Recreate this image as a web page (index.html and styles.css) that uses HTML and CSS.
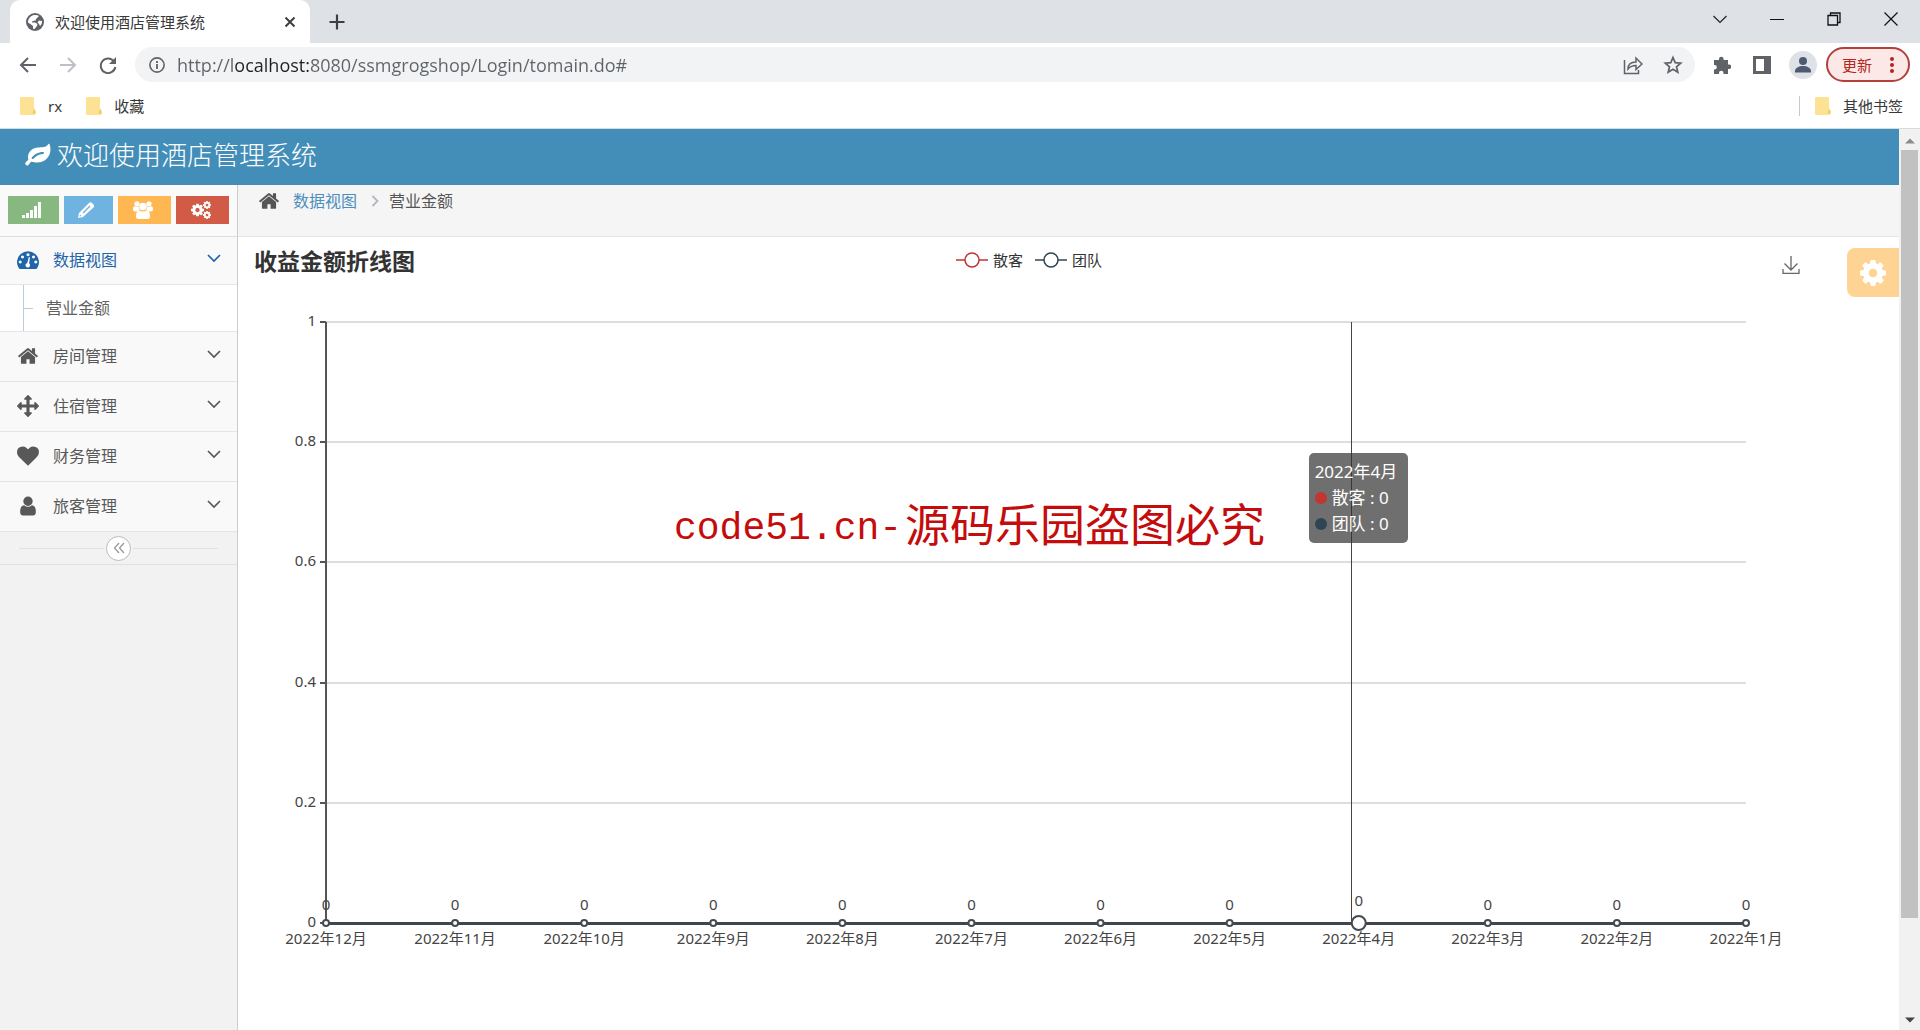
FILE: index.html
```html
<!DOCTYPE html>
<html lang="zh-CN">
<head>
<meta charset="utf-8">
<meta name="viewport" content="width=device-width, initial-scale=1">
<title>欢迎使用酒店管理系统</title>
<link rel="stylesheet" href="styles.css">
</head>
<body>
<svg class="sprite" aria-hidden="true">
  <symbol id="home" viewBox="0 0 1792 1792"><path d="M1472 992v480q0 26-19 45t-45 19h-384v-384h-256v384h-384q-26 0-45-19t-19-45v-480q0-1 .5-3t.5-3l575-474 575 474q1 2 1 6zm223-69l-62 74q-8 9-21 11h-3q-13 0-21-7l-692-577-692 577q-12 8-24 7-13-2-21-11l-62-74q-8-10-7-23.500t11-21.500l719-599q32-26 76-26t76 26l244 204v-195q0-14 9-23t23-9h192q14 0 23 9t9 23v408l219 182q10 8 11 21.500t-7 23.500z"/></symbol>
  <symbol id="user" viewBox="0 0 1792 1792"><path d="M1536 1399q0 109-62.500 187t-150.500 78h-854q-88 0-150.500-78t-62.500-187q0-85 8.500-160.500t31.500-152 58.500-131 94-89 134.500-34.500q131 128 313 128t313-128q76 0 134.500 34.500t94 89 58.500 131 31.500 152 8.500 160.500zm-256-887q0 159-112.500 271.500t-271.500 112.500-271.500-112.500-112.500-271.500 112.500-271.500 271.500-112.500 271.500 112.500 112.500 271.500z"/></symbol>
  <symbol id="heart" viewBox="0 0 1792 1792"><path d="M896 1664q-26 0-44-18l-624-602q-10-8-27.500-26t-55.500-65.500-68-97.500-53.500-121-23.500-138q0-220 127-344t351-124q62 0 126.500 21.500t120 58 95.500 68.500 76 68q36-36 76-68t95.500-68.500 120-58 126.500-21.500q224 0 351 124t127 344q0 221-229 450l-623 600q-18 18-44 18z"/></symbol>
  <symbol id="arrows" viewBox="0 0 1792 1792"><path d="M1792 896q0 26-19 45l-256 256q-19 19-45 19t-45-19-19-45v-128h-384v384h128q26 0 45 19t19 45-19 45l-256 256q-19 19-45 19t-45-19l-256-256q-19-19-19-45t19-45 45-19h128v-384h-384v128q0 26-19 45t-45 19-45-19l-256-256q-19-19-19-45t19-45l256-256q19-19 45-19t45 19 19 45v128h384v-384h-128q-26 0-45-19t-19-45 19-45l256-256q19-19 45-19t45 19l256 256q19 19 19 45t-19 45-45 19h-128v384h384v-128q0-26 19-45t45-19 45 19l256 256q19 19 19 45z"/></symbol>
  <symbol id="cog" viewBox="128 128 1536 1536"><path d="M1152 896q0-106-75-181t-181-75-181 75-75 181 75 181 181 75 181-75 75-181zm512-109v222q0 12-8 23t-20 13l-185 28q-19 54-39 91 35 50 107 138 10 12 10 25t-9 23q-27 37-99 108t-94 71q-12 0-26-9l-138-108q-44 23-91 38-16 136-29 186-7 28-36 28h-222q-14 0-24.500-8.500t-11.500-21.500l-28-184q-49-16-90-37l-141 107q-10 9-25 9-14 0-25-11-126-114-165-168-7-10-7-23 0-12 8-23 15-21 51-66.500t54-70.500q-27-50-41-99l-183-27q-13-2-21-12.500t-8-23.500v-222q0-12 8-23t19-13l186-28q14-46 39-92-40-57-107-138-10-12-10-24 0-10 9-23 26-36 98.500-107.500t94.500-71.500q13 0 26 10l138 107q44-23 91-38 16-136 29-186 7-28 36-28h222q14 0 24.500 8.500t11.500 21.500l28 184q49 16 90 37l142-107q9-9 24-9 13 0 25 10 129 119 165 170 7 8 7 22 0 12-8 23-15 21-51 66.500t-54 70.500q26 50 41 98l183 28q13 2 21 12.500t8 23.500z"/></symbol>
  <symbol id="chevron" viewBox="0 0 14 14"><path d="M1 4l6 6 6-6" fill="none" stroke="currentColor" stroke-width="1.700"/></symbol>
  <symbol id="folder" viewBox="0 0 16 18"><path d="M1 0h12a1 1 0 0 1 1 1v10l2 3v2a2 2 0 0 1-2 2H1a1 1 0 0 1-1-1V1a1 1 0 0 1 1-1z" fill="#fde293"/><path d="M12.500 16l1.500-4 1.500 3.500-1 1.500z" fill="#eecb62"/></symbol>
</svg>

<header class="browser">
  <div class="tabstrip">
    <div class="tab">
      <svg class="i18" viewBox="0 0 18 18"><circle cx="9" cy="9" r="9" fill="#5f6368"/><path d="M8.500 2c2 0 3.500.2 4.500 1l-2.500 2.500-1 2-3 .5-.5 1.500h3l2.500 1.500-.5 2-2.500 3-1.500-.3v-2.700l-2-1.500-3-2C2 6 4 2.500 8.500 2zM13 7.500l3 .5c.2 2-.7 4-2 5l-1-2-1.500-1.500z" fill="#fff"/></svg>
      <span class="tab-title">欢迎使用酒店管理系统</span>
      <button class="icon-btn" aria-label="关闭标签页"><svg class="i12" viewBox="0 0 12 12"><path d="M1.500 1.500l9 9M10.500 1.500l-9 9" stroke="#3c4043" stroke-width="2"/></svg></button>
    </div>
    <button class="icon-btn new-tab" aria-label="新标签页"><svg class="i16" viewBox="0 0 16 16"><path d="M8 0.500v15M.5 8h15" stroke="#3c4043" stroke-width="2.200"/></svg></button>
    <div class="window-btns">
      <button class="icon-btn" aria-label="搜索标签页"><svg class="i14" viewBox="0 0 14 14"><path d="M.5 4L7 10.500 13.500 4" fill="none" stroke="#222" stroke-width="1.200"/></svg></button>
      <button class="icon-btn" aria-label="最小化"><svg class="i14" viewBox="0 0 14 14"><path d="M0 7.500h14" stroke="#111"/></svg></button>
      <button class="icon-btn" aria-label="还原"><svg class="i14" viewBox="0 0 14 14"><path d="M1 3.500h9.500v9.500H1zM3.500 3.500V1H13v9.500h-2.500" fill="none" stroke="#111" stroke-width="1.300"/></svg></button>
      <button class="icon-btn" aria-label="关闭"><svg class="i14" viewBox="0 0 14 14"><path d="M.5.500l13 13M13.500.500l-13 13" stroke="#111" stroke-width="1.200"/></svg></button>
    </div>
  </div>
  <div class="toolbar">
    <button class="icon-btn" aria-label="后退"><svg class="i18" viewBox="0 0 18 18"><path d="M17 9H2M9 2L2 9l7 7" fill="none" stroke="#5f6368" stroke-width="2"/></svg></button>
    <button class="icon-btn" aria-label="前进"><svg class="i18" viewBox="0 0 18 18"><path d="M1 9h15M9 2l7 7-7 7" fill="none" stroke="#bdc1c6" stroke-width="2"/></svg></button>
    <button class="icon-btn" aria-label="刷新"><svg class="i18" viewBox="0 0 18 18"><path d="M15 5.500A7.300 7.300 0 1 0 16.300 11" fill="none" stroke="#5f6368" stroke-width="2"/><path d="M17 1v7h-7z" fill="#5f6368"/></svg></button>
    <div class="address">
      <svg class="i16" viewBox="0 0 16 16"><circle cx="8" cy="8" r="7.100" fill="none" stroke="#5f6368" stroke-width="1.600"/><path d="M8 7v5M8 4v2" stroke="#5f6368" stroke-width="1.800"/></svg>
      <input class="url" type="text" aria-label="地址栏" value="http://localhost:8080/ssmgrogshop/Login/tomain.do#">
      <button class="icon-btn" aria-label="分享"><svg class="i20" viewBox="0 0 20 20"><path d="M1.500 5v13.500h14V15M5 14c0-5 3-7 8-7V3l6 6-6 5.500v-4c-4 0-6 1-8 3.500z" fill="none" stroke="#5f6368" stroke-width="1.500"/></svg></button>
      <button class="icon-btn" aria-label="添加书签"><svg class="i20" viewBox="0 0 20 20"><path d="M10 2.500l2.200 5.100 5.500.500-4.200 3.700 1.300 5.400L10 14.300l-4.800 2.900 1.300-5.400L2.300 8.100l5.500-.5z" fill="none" stroke="#5f6368" stroke-width="1.700"/></svg></button>
    </div>
    <button class="icon-btn" aria-label="扩展程序"><svg class="i18" viewBox="0 0 18 18"><path d="M1 4h5V3a2.300 2.300 0 0 1 4.600 0v1H15v4.500h1a2.200 2.200 0 0 1 0 4.500h-1v5h-4.500v-1a2.200 2.200 0 0 0-4.500 0v1H1v-4.500h1A2.300 2.300 0 0 0 2 9H1z" fill="#5f6368"/></svg></button>
    <button class="icon-btn" aria-label="侧边栏"><svg class="i18" viewBox="0 0 18 18"><path d="M0 0h18v18H0zM3 3v12h8V3z" fill="#5f6368" fill-rule="evenodd"/></svg></button>
    <button class="icon-btn" aria-label="用户"><svg class="i28" viewBox="0 0 28 28"><circle cx="14" cy="14" r="14" fill="#dee1e6"/><circle cx="14" cy="10" r="4" fill="#4d5a70"/><path d="M6 21.500V20c0-3 4-5 8-5s8 2 8 5v1.500z" fill="#4d5a70"/></svg></button>
    <button class="update">更新<svg class="dots" viewBox="0 0 4 16"><circle cx="2" cy="2" r="2"/><circle cx="2" cy="8" r="2"/><circle cx="2" cy="14" r="2"/></svg></button>
  </div>
  <nav class="bookmarks" aria-label="书签">
    <a href="#"><svg class="folder"><use href="#folder"/></svg>rx</a>
    <a href="#"><svg class="folder"><use href="#folder"/></svg>收藏</a>
    <a href="#" class="other"><svg class="folder"><use href="#folder"/></svg>其他书签</a>
  </nav>
</header>

<div class="viewport">
  <div class="page">
    <div class="navbar">
      <a href="#" class="brand"><svg class="leaf" viewBox="0 0 26 24"><path fill-rule="evenodd" d="M24.500 1c1.200 3 1.400 7 0 10.500-2 5-7 8-12 8-2.500 0-4-.8-6-.8-1.500 0-2.500 3.800-4.200 3.800C1 22.500 0 21 .3 20c.4-1.500 3-2.500 3-3.500 0-.8-.5-1.800-.3-3.500C3.600 8 8 5 13 4.500c4-.4 8 .3 10-3 .4-.7 1.100-1.200 1.500-.5zM18 9c-5 0-8.500 2.500-11 5.200-1 1.200.3 2.400 1.400 1.500C11 13 13.500 11 18 10.900c1.400 0 1.400-1.900 0-1.900z" fill="#fff"/></svg>欢迎使用酒店管理系统</a>
    </div>
    <div class="container">
      <aside class="sidebar">
        <div class="shortcuts">
          <button class="green" aria-label="统计"><svg class="glyph" viewBox="0 0 20 18"><path d="M0 14h3v3H0zM4 12h3v5H4zM8 9h3v8H8zM12 5h3v12h-3zM16 1h3v16h-3z"/></svg></button>
          <button class="blue" aria-label="编辑"><svg class="glyph" viewBox="0 0 20 18"><path fill-rule="evenodd" d="M1 17l1-5L12 2q1.500-1.500 3 0l1.500 1.500q1.500 1.500 0 3L6 16zM3 13.500l-.5 2 2-.5zM5.500 11.500l1 1 7-7-1-1z"/></svg></button>
          <button class="orange" aria-label="用户组"><svg class="glyph" viewBox="0 0 20 18"><circle cx="4" cy="2.800" r="2.600"/><circle cx="16" cy="2.800" r="2.600"/><circle cx="10" cy="5.500" r="3.800"/><path d="M0 8.500q0-3.300 2-3.300 2 1 3.600 0 0 2.300 1.400 4-2 0-3 1.300H2q-2 0-2-2zM20 8.500q0-3.300-2-3.300-2 1-3.600 0 0 2.300-1.400 4 2 0 3 1.300h2q2 0 2-2zM3 15.500q0-6 3.300-6 3.700 2 7.400 0 3.300 0 3.300 6 0 2.500-2.500 2.500h-9Q3 18 3 15.500z"/></svg></button>
          <button class="red" aria-label="设置"><svg class="glyph" viewBox="0 0 20 18"><use href="#cog" x="0" y="2.500" width="13" height="13"/><use href="#cog" x="12" y="0" width="8" height="8"/><use href="#cog" x="12" y="10" width="8" height="8"/></svg></button>
        </div>
        <nav class="menu">
          <a href="#" class="item active"><svg class="mi" viewBox="0 0 24 24"><path fill-rule="evenodd" d="M2 21A12 12 0 1 1 22 21q-.5.800-1.500.800h-17Q2.500 21.800 2 21zM3.500 12.500a1.700 1.700 0 1 0 .01 0zM6 7a1.700 1.700 0 1 0 .01 0zM12 4.500a1.700 1.700 0 1 0 .01 0zM18 7a1.700 1.700 0 1 0 .01 0zM20.500 12.500a1.700 1.700 0 1 0 .01 0zM12.800 9l-1.600 6.200a2.500 2.500 0 1 0 2 .4L14.200 9.400q-.7-1-1.400-.4z"/></svg><span>数据视图</span><svg class="arrow"><use href="#chevron"/></svg></a>
          <div class="submenu"><a href="#">营业金额</a></div>
          <a href="#" class="item"><svg class="mi"><use href="#home"/></svg><span>房间管理</span><svg class="arrow"><use href="#chevron"/></svg></a>
          <a href="#" class="item"><svg class="mi"><use href="#arrows"/></svg><span>住宿管理</span><svg class="arrow"><use href="#chevron"/></svg></a>
          <a href="#" class="item"><svg class="mi"><use href="#heart"/></svg><span>财务管理</span><svg class="arrow"><use href="#chevron"/></svg></a>
          <a href="#" class="item"><svg class="mi"><use href="#user"/></svg><span>旅客管理</span><svg class="arrow"><use href="#chevron"/></svg></a>
        </nav>
        <div class="collapse"><button aria-label="收起菜单"><svg class="i12" viewBox="0 0 12 12"><path d="M6 1L1.500 6 6 11M11 1L6.500 6l4.500 5" fill="none" stroke="#999" stroke-width="1.300"/></svg></button></div>
      </aside>

      <main class="main">
        <nav class="crumbs" aria-label="位置">
          <svg class="mi"><use href="#home"/></svg><a href="#">数据视图</a><svg class="sep" viewBox="0 0 8 12"><path d="M1.500 1l5 5-5 5" fill="none" stroke="#b2b6bf" stroke-width="1.800"/></svg><span>营业金额</span>
        </nav>
        <button class="settings" aria-label="页面设置"><svg class="gear"><use href="#cog"/></svg></button>
        <section class="chart">
          <div class="chart-head">
            <h1>收益金额折线图</h1>
            <div class="legend">
              <span class="key red-key"><svg viewBox="0 0 32 16"><path d="M0 8h32"/><circle cx="16" cy="8" r="7"/></svg>散客</span>
              <span class="key navy-key"><svg viewBox="0 0 32 16"><path d="M0 8h32"/><circle cx="16" cy="8" r="7"/></svg>团队</span>
            </div>
            <button class="icon-btn save" aria-label="保存为图片"><svg class="i18" viewBox="0 0 18 18"><path d="M9 0v14M2.500 7.500L9 14l6.500-6.500M1 13v4.300h16V13" fill="none" stroke="#666" stroke-width="1.300"/></svg></button>
          </div>
          <div class="plot">
            <svg class="plot-svg" role="img" aria-label="收益金额折线图">
              <g class="grid">
                <line x1="0" x2="100%" y1="0" y2="0"/><line x1="0" x2="100%" y1="20%" y2="20%"/><line x1="0" x2="100%" y1="40%" y2="40%"/><line x1="0" x2="100%" y1="60%" y2="60%"/><line x1="0" x2="100%" y1="80%" y2="80%"/>
              </g>
              <g class="axis">
                <line x1="0" x2="0" y1="0" y2="100%"/>
                <line x1="-6" x2="0" y1="0" y2="0"/><line x1="-6" x2="0" y1="20%" y2="20%"/><line x1="-6" x2="0" y1="40%" y2="40%"/><line x1="-6" x2="0" y1="60%" y2="60%"/><line x1="-6" x2="0" y1="80%" y2="80%"/><line x1="-6" x2="0" y1="100%" y2="100%"/>
              </g>
              <g class="ylabels">
                <text x="-10" y="0" dy="4">1</text><text x="-10" y="20%" dy="4">0.8</text><text x="-10" y="40%" dy="4">0.6</text><text x="-10" y="60%" dy="4">0.4</text><text x="-10" y="80%" dy="4">0.2</text><text x="-10" y="100%" dy="4">0</text>
              </g>
              <line class="pointer" x1="72.200%" x2="72.200%" y1="0" y2="100%"/>
              <line class="series" x1="0" x2="100%" y1="100%" y2="100%"/>
              <g id="points"></g>
            </svg>
            <div class="tooltip">
              <div>2022年4月</div>
              <div><i class="dot red-dot"></i>散客 : 0</div>
              <div><i class="dot navy-dot"></i>团队 : 0</div>
            </div>
            <div class="watermark"><span>code51.cn-</span>源码乐园盗图必究</div>
          </div>
        </section>
      </main>
    </div>
  </div>
  <div class="scrollbar" aria-hidden="true">
    <svg class="tri" viewBox="0 0 10 6"><path d="M0 5.500L5 .5l5 5z" fill="#8b8b8b"/></svg>
    <div class="thumb"></div>
    <svg class="tri" viewBox="0 0 10 6"><path d="M0 .5l5 5 5-5z" fill="#444"/></svg>
  </div>
</div>
<script src="chart.js"></script>
</body>
</html>
```
FILE: styles.css
```css
* { box-sizing: border-box; }
body {
  margin: 0;
  min-height: 100vh;
  display: flex;
  flex-direction: column;
  background: #fff;
  color: #393939;
  font: 400 16px/24px "Noto Sans", "Noto Sans CJK SC", sans-serif;
}
a { color: inherit; text-decoration: none; }
button { font: inherit; padding: 0; border: 0; background: none; cursor: pointer; }
svg { display: block; flex: none; fill: currentColor; }
.sprite { position: absolute; width: 0; height: 0; }
.i12 { width: 12px; height: 12px; }
.i14 { width: 14px; height: 14px; }
.i16 { width: 16px; height: 16px; }
.i18 { width: 18px; height: 18px; }
.i20 { width: 20px; height: 20px; }
.i28 { width: 28px; height: 28px; }
.icon-btn { display: flex; align-items: center; justify-content: center; }

/* browser frame */
.browser { font-size: 15px; border-bottom: 1px solid #d5dbe0; }
.tabstrip { display: flex; height: 43px; background: #dee1e6; padding-left: 10px; }
.tab {
  display: flex;
  align-items: center;
  width: 300px;
  padding: 0 14px 0 16px;
  background: #fff;
  border-radius: 10px 10px 0 0;
}
.tab-title { flex: 1; margin-left: 11px; }
.new-tab { margin-left: 19px; }
.window-btns { display: flex; gap: 43px; margin-left: auto; padding: 0 22px 6px 0; }
.toolbar { display: flex; align-items: center; height: 45px; padding: 0 10px 2px 19px; }
.toolbar > .icon-btn { margin-right: 22px; }
.address {
  flex: 1;
  display: flex;
  align-items: center;
  gap: 20px;
  height: 35px;
  margin: 0 18px 0 -4px;
  padding: 0 12px 0 14px;
  border-radius: 18px;
  background: #f1f3f4;
}
.url {
  flex: 1;
  height: 35px;
  margin-left: -8px;
  padding: 0;
  border: 0;
  outline: 0;
  font: 400 18px/24px "Open Sans", "Noto Sans CJK SC", sans-serif;
  color: transparent;
  background: linear-gradient(90deg, #5f6368 56px, #202124 56px 134px, #5f6368 134px) text;
}
.toolbar > .icon-btn:nth-last-child(2) { margin: 0 9px 0 -4px; }
.update {
  display: flex;
  align-items: center;
  justify-content: space-between;
  width: 84px;
  height: 35px;
  padding: 0 14px 0 14px;
  border: 2px solid #b3413b;
  border-radius: 18px;
  background: #fce8e6;
  color: #b3261e;
}
.dots { width: 4px; height: 16px; }
.bookmarks { display: flex; align-items: center; gap: 24px; height: 40px; padding: 0 17px 4px 20px; }
.bookmarks a { display: flex; align-items: center; gap: 12px; }
.bookmarks .other { margin-left: auto; padding-left: 15px; border-left: 1px solid #c6c9cd; height: 20px; }
.folder { width: 16px; height: 18px; }

/* page area */
.viewport { flex: 1; display: flex; }
.page { flex: 1; display: flex; flex-direction: column; }
.scrollbar {
  display: flex;
  flex-direction: column;
  align-items: center;
  width: 21px;
  padding: 9px 2px 7px;
  background: #f1f1f1;
}
.thumb { width: 17px; height: 768px; margin: 6px 0 auto; background: #c1c1c1; }
.tri { width: 10px; height: 6px; }
.navbar { height: 56px; padding-left: 25px; background: #438eb9; }
.brand { display: inline-flex; align-items: center; gap: 6px; height: 52px; color: #fff; font-size: 26px; font-weight: 300; }
.leaf { width: 26px; height: 24px; }
.container { flex: 1; display: flex; }

/* sidebar */
.sidebar { width: 238px; flex: none; background: #f2f2f2; border-right: 1px solid #ccc; color: #585858; }
.shortcuts {
  display: grid;
  grid-template-columns: 51fr 49fr 53fr 53fr;
  gap: 5px;
  height: 52px;
  padding: 11px 8px 12px;
  background: #fafafa;
  border-bottom: 1px solid #ddd;
}
.shortcuts button { display: flex; align-items: center; justify-content: center; padding-right: 3px; color: #fff; }
.green { background: #87b87f; }
.blue { background: #6fb3e0; }
.orange { background: #ffb752; }
.red { background: #d15b47; }
.glyph { width: 20px; height: 18px; }
.item {
  display: flex;
  align-items: center;
  height: 50px;
  padding: 0 16px 2px;
  background: #f9f9f9;
  border-bottom: 1px solid #e5e5e5;
}
.active { height: 48px; color: #1f65a8; }
.item span { flex: 1; margin-left: 13px; }
.mi { width: 24px; height: 22px; }
.arrow { width: 14px; height: 14px; margin-bottom: 3px; }
.submenu { height: 47px; padding-left: 23px; background: #fff; border-bottom: 1px solid #e5e5e5; }
.submenu a { display: flex; align-items: center; gap: 13px; height: 46px; border-left: 1px solid #bcd; color: #616161; }
.submenu a::before { content: ""; width: 9px; border-top: 1px solid #bcd; }
.collapse { display: flex; align-items: center; gap: 2px; height: 33px; padding: 0 19px; border-bottom: 1px solid #e0e0e0; }
.collapse::before, .collapse::after { content: ""; flex: 1; border-top: 1px solid #e0e0e0; }
.collapse button { display: flex; align-items: center; justify-content: center; width: 25px; height: 25px; border: 1px solid #bbb; border-radius: 50%; background: #fff; }

/* main */
.main { flex: 1; position: relative; background: #fff; }
.crumbs { display: flex; align-items: center; height: 52px; padding: 0 0 20px 19px; background: #f5f5f5; border-bottom: 1px solid #e5e5e5; color: #555; }
.crumbs a { margin-left: 12px; color: #4c8fbd; }
.sep { width: 8px; height: 12px; margin: 0 10px 0 14px; }
.settings {
  position: absolute;
  right: 0;
  top: 63px;
  display: flex;
  align-items: center;
  justify-content: center;
  width: 52px;
  height: 49px;
  border-radius: 8px 0 0 8px;
  background: #ffd394;
  color: #fff;
}
.gear { width: 26px; height: 26px; }
.chart { padding: 10px 153px 90px 88px; font-size: 15px; color: #333; }
.chart-head { display: grid; grid-template-columns: 1fr auto 1fr; align-items: center; height: 28px; margin: 0 -54px 0 -72px; }
h1 { margin: 0; font-size: 23px; line-height: 28px; font-weight: 700; }
.legend { display: flex; gap: 12px; margin: 0 0 2px 4px; }
.key { display: flex; align-items: center; gap: 5px; }
.key svg { width: 32px; height: 16px; fill: #fff; stroke-width: 1.5; }
.red-key svg { stroke: #c23531; }
.navy-key svg { stroke: #2f4554; }
.save { justify-self: end; margin-top: 8px; }
.plot { position: relative; height: 601px; margin-top: 47px; }
.plot-svg { width: 100%; height: 100%; overflow: visible; shape-rendering: crispEdges; }
.grid line { stroke: #ddd; stroke-width: 2; }
.axis line { stroke: #555; stroke-width: 2; }
.pointer { stroke: #444; stroke-width: 1; }
.series { stroke: #40464c; stroke-width: 3; }
.plot-svg text { font-size: 15px; fill: #444; text-anchor: middle; }
.plot-svg .ylabels text { text-anchor: end; }
.plot-svg circle { fill: #fff; stroke: #444b52; stroke-width: 2; shape-rendering: auto; }
.tooltip {
  position: absolute;
  left: 69.2%;
  top: 131px;
  padding: 6px;
  width: 99px;
  border-radius: 5px;
  background: rgba(50, 50, 50, .7);
  color: #fff;
  font-size: 17px;
  line-height: 26px;
  white-space: nowrap;
}
.dot { display: inline-block; width: 12px; height: 12px; margin-right: 5px; border-radius: 50%; }
.red-dot { background: #c23531; }
.navy-dot { background: #2f4554; }
.watermark {
  position: absolute;
  left: 348px;
  top: 173px;
  color: #c40c0c;
  font-size: 45px;
  line-height: 60px;
  white-space: nowrap;
}
.watermark span { margin-right: 3px; font-family: "Liberation Mono", monospace; font-size: 38px; vertical-align: 3px; }
```
FILE: chart.js
```js
// Draws one marker, value and month label per data point along the x axis.
const months = [12, 11, 10, 9, 8, 7, 6, 5, 4, 3, 2, 1];
const hovered = 4;
const NS = "http://www.w3.org/2000/svg";
const layer = document.getElementById("points");

function add(tag, attrs, text) {
  const node = document.createElementNS(NS, tag);
  for (const key in attrs) node.setAttribute(key, attrs[key]);
  if (text !== undefined) node.textContent = text;
  layer.appendChild(node);
}

months.forEach((month, i) => {
  const x = (i / (months.length - 1)) * 100 + "%";
  const big = month === hovered;
  add("circle", { cx: x, cy: "100%", r: big ? 7 : 3 });
  add("text", { x, y: "100%", dy: big ? -17 : -13 }, "0");
  add("text", { x, y: "100%", dy: 21 }, "2022年" + month + "月");
});
```
